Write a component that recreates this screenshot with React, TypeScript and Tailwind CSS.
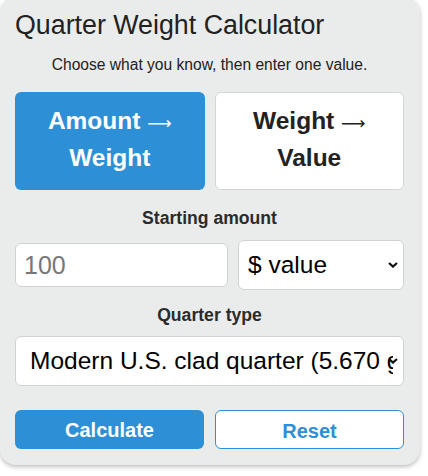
import React, { useState } from "react";

function Chevron() {
  return (
    <svg
      className="pointer-events-none absolute right-[6px] top-1/2 -translate-y-1/2"
      width="10"
      height="6"
      viewBox="0 0 10 6"
      fill="none"
    >
      <path d="M1 1l4 3.6L9 1" stroke="#111" strokeWidth="2.2" />
    </svg>
  );
}

function ModeButton({
  active,
  onClick,
  from,
  to,
}: {
  active: boolean;
  onClick: () => void;
  from: string;
  to: string;
}) {
  return (
    <button
      type="button"
      onClick={onClick}
      className={
        active
          ? "flex h-[98px] items-center justify-center rounded-[6px] bg-[#2d8fd6] px-[12px] pb-[4px] text-[24.5px] font-bold leading-[37px] text-white"
          : "flex h-[98px] items-center justify-center rounded-[6px] border border-[#d3d6d8] bg-white px-[12px] pb-[4px] text-[24.5px] font-bold leading-[37px] text-[#222]"
      }
    >
      <span>
        {from}{" "}
        <span className="font-['DejaVu_Sans'] text-[17px] font-normal leading-none">
          ⟶
        </span>{" "}
        {to}
      </span>
    </button>
  );
}

function App() {
  const [mode, setMode] = useState("amount");
  const [amount, setAmount] = useState("");
  const [unit, setUnit] = useState("value");
  const [quarter, setQuarter] = useState("clad");

  const onReset = () => {
    setAmount("");
    setUnit("value");
    setQuarter("clad");
  };

  return (
    <div className="min-h-screen bg-white font-['Liberation_Sans',Arial,sans-serif]">
      <div className="-mt-[3px] w-[420px] rounded-[16px] bg-[#eaebeb] pb-[16px] pl-[15px] pr-[16px] pt-[12px] shadow-[0_2px_4px_rgba(0,0,0,0.25)]">
        <h1 className="text-[26.8px] leading-[32px] text-[#222]">
          Quarter Weight Calculator
        </h1>
        <p className="mt-[14px] text-center text-[15.6px] leading-[20px] text-[#222]">
          Choose what you know, then enter one value.
        </p>

        <div className="mt-[17px] grid grid-cols-2 gap-[10px]">
          <ModeButton
            active={mode === "amount"}
            onClick={() => setMode("amount")}
            from="Amount"
            to="Weight"
          />
          <ModeButton
            active={mode === "weight"}
            onClick={() => setMode("weight")}
            from="Weight"
            to="Value"
          />
        </div>

        <p className="mt-[17px] text-center text-[17.6px] font-bold leading-[22px] text-[#2b2b2b]">
          Starting amount
        </p>
        <div className="mt-[11px] flex items-center gap-[10px]">
          <input
            type="text"
            value={amount}
            onChange={(e) => setAmount(e.target.value)}
            placeholder="100"
            className="h-[44px] w-[213px] rounded-[6px] border border-[#cfd3d6] bg-white pl-[8px] text-[25px] text-[#111] outline-none placeholder:text-[#777]"
          />
          <div className="relative flex-1">
            <select
              value={unit}
              onChange={(e) => setUnit(e.target.value)}
              className="h-[50px] w-full appearance-none rounded-[6px] border border-[#cfd3d6] bg-white pl-[9px] pr-[6px] text-[24.5px] text-black outline-none"
            >
              <option value="value">$ value</option>
              <option value="count">coins</option>
              <option value="rolls">rolls</option>
            </select>
            <Chevron />
          </div>
        </div>

        <p className="mt-[14px] text-center text-[17.6px] font-bold leading-[22px] text-[#2b2b2b]">
          Quarter type
        </p>
        <div className="relative mt-[10px]">
          <select
            value={quarter}
            onChange={(e) => setQuarter(e.target.value)}
            className="h-[50px] w-full appearance-none rounded-[6px] border border-[#cfd3d6] bg-white pl-[14px] pr-[10px] text-[24.5px] text-black outline-none"
          >
            <option value="clad">Modern U.S. clad quarter (5.670 g)</option>
            <option value="silver">90% silver quarter (6.250 g)</option>
          </select>
          <Chevron />
        </div>

        <div className="mt-[24px] grid grid-cols-2 gap-[11px]">
          <button
            type="button"
            className="h-[39px] rounded-[6px] bg-[#2d8fd6] text-[20px] font-bold text-white"
          >
            Calculate
          </button>
          <button
            type="button"
            onClick={onReset}
            className="h-[39px] rounded-[6px] border border-[#2d8fd6] bg-white pt-[2px] text-[20px] font-bold text-[#2d8fd6]"
          >
            Reset
          </button>
        </div>
      </div>
    </div>
  );
}

export default App;
